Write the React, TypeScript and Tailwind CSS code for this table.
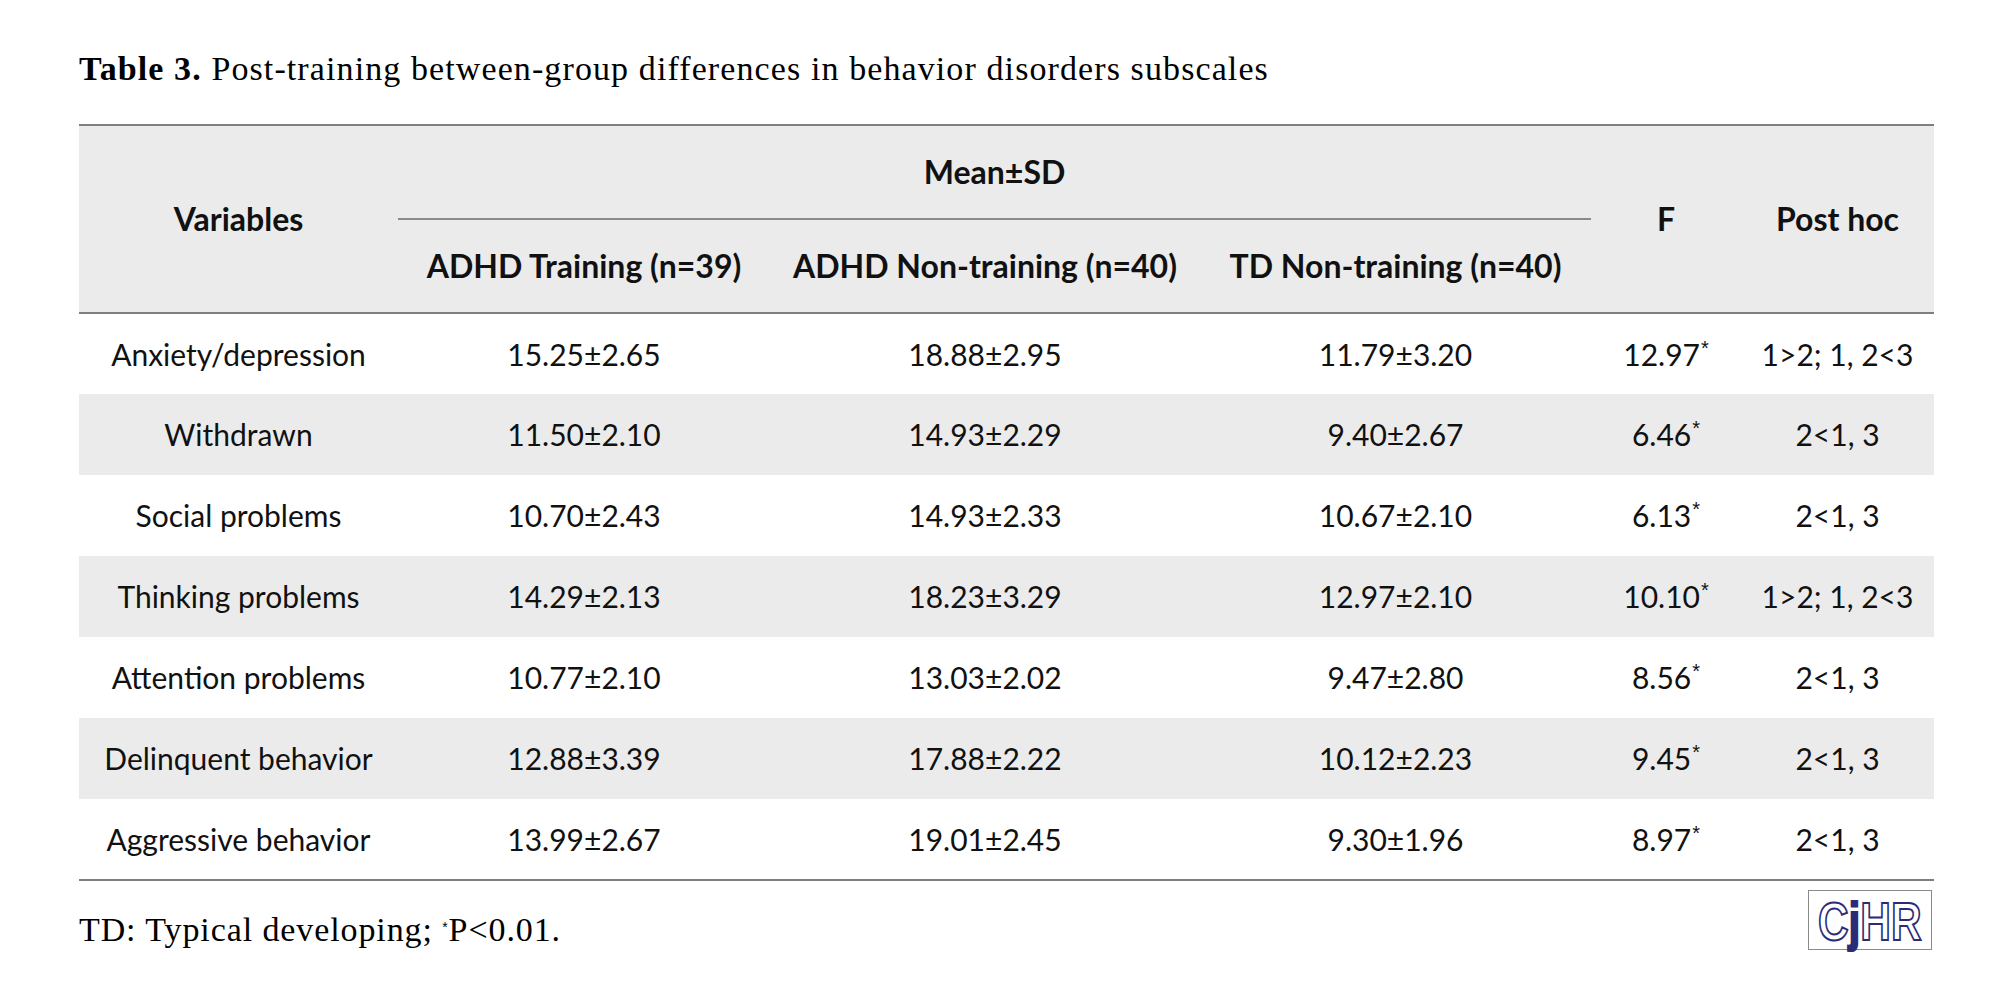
import { FC } from "react";

type Row = {
    name: string
    training: string
    nonTraining: string
    td: string
    f: string
    postHoc: string
}

const rows: Row[] = [
    { name: "Anxiety/depression", training: "15.25±2.65", nonTraining: "18.88±2.95", td: "11.79±3.20", f: "12.97", postHoc: "1>2; 1, 2<3" },
    { name: "Withdrawn", training: "11.50±2.10", nonTraining: "14.93±2.29", td: "9.40±2.67", f: "6.46", postHoc: "2<1, 3" },
    { name: "Social problems", training: "10.70±2.43", nonTraining: "14.93±2.33", td: "10.67±2.10", f: "6.13", postHoc: "2<1, 3" },
    { name: "Thinking problems", training: "14.29±2.13", nonTraining: "18.23±3.29", td: "12.97±2.10", f: "10.10", postHoc: "1>2; 1, 2<3" },
    { name: "Attention problems", training: "10.77±2.10", nonTraining: "13.03±2.02", td: "9.47±2.80", f: "8.56", postHoc: "2<1, 3" },
    { name: "Delinquent behavior", training: "12.88±3.39", nonTraining: "17.88±2.22", td: "10.12±2.23", f: "9.45", postHoc: "2<1, 3" },
    { name: "Aggressive behavior", training: "13.99±2.67", nonTraining: "19.01±2.45", td: "9.30±1.96", f: "8.97", postHoc: "2<1, 3" },
];

// journal mark, bottom right
const Logo: FC = () => (
    <div className="w-[124px] h-[60px] border-[1.5px] border-[#8a8a8a] bg-white flex items-center justify-center">
        <span className="inline-block scale-x-[0.8] whitespace-nowrap font-['Liberation_Sans',sans-serif] font-bold text-[53px] leading-none pt-[2px] text-white [-webkit-text-stroke:2px_#2b2c78]">
            C<span className="text-[#2b2c78]">j</span>HR
        </span>
    </div>
);

const App: FC = () => {
    return (
        <div className="w-[2000px] h-[985px] bg-white text-black pl-[79px] pt-[47px]">
            <h1 className="text-[34px] leading-[44px] font-['Liberation_Serif',serif] tracking-[1.1px]">
                <span className="font-bold">Table 3.</span> Post-training between-group differences in behavior disorders subscales
            </h1>

            <table className="mt-[33px] w-[1855px] table-fixed border-collapse font-['Lato',sans-serif] text-[30px] text-[#111]">
                <colgroup>
                    <col className="w-[319px]" />
                    <col className="w-[372px]" />
                    <col className="w-[430px]" />
                    <col className="w-[391px]" />
                    <col className="w-[150px]" />
                    <col className="w-[193px]" />
                </colgroup>
                <thead className="text-[32px]">
                    <tr className="bg-[#ebebeb] border-t-[2px] border-[#7f7f7f]">
                        <th rowSpan={2} className="font-bold text-center">Variables</th>
                        <th colSpan={3} className="h-[94px] font-bold text-center border-b-[2px] border-[#8a8a8a]">Mean±SD</th>
                        <th rowSpan={2} className="font-bold text-center">F</th>
                        <th rowSpan={2} className="font-bold text-center">Post hoc</th>
                    </tr>
                    <tr className="bg-[#ebebeb] border-b-[2px] border-[#7f7f7f]">
                        <th className="h-[94px] font-bold text-center whitespace-nowrap">ADHD Training (n=39)</th>
                        <th className="font-bold text-center whitespace-nowrap">ADHD Non-training (n=40)</th>
                        <th className="font-bold text-center whitespace-nowrap">TD Non-training (n=40)</th>
                    </tr>
                </thead>
                <tbody>
                    {rows.map((row, i) => (
                        <tr key={row.name} className={`${i % 2 === 1 ? "bg-[#ebebeb]" : "bg-white"} ${i === rows.length - 1 ? "border-b-[2px] border-[#7f7f7f]" : ""}`}>
                            <td className="h-[81px] text-center whitespace-nowrap">{row.name}</td>
                            <td className="text-center">{row.training}</td>
                            <td className="text-center">{row.nonTraining}</td>
                            <td className="text-center">{row.td}</td>
                            <td className="text-center">{row.f}<sup className="text-[20px] font-['Liberation_Sans',sans-serif] relative -top-[11px] ml-[1px]">*</sup></td>
                            <td className="text-center whitespace-nowrap">{row.postHoc}</td>
                        </tr>
                    ))}
                </tbody>
            </table>

            <div className="flex w-[1855px] items-start justify-between pt-[9px]">
                <p className="mt-[20px] text-[34px] leading-[40px] font-['Liberation_Serif',serif] tracking-[0.9px]">
                    TD: Typical developing; <sup className="text-[14px] font-['Liberation_Sans',sans-serif] relative -top-[9px]">*</sup>P&lt;0.01.
                </p>
                <div className="mr-[2px]">
                    <Logo />
                </div>
            </div>
        </div>
    );
}

export default App;
